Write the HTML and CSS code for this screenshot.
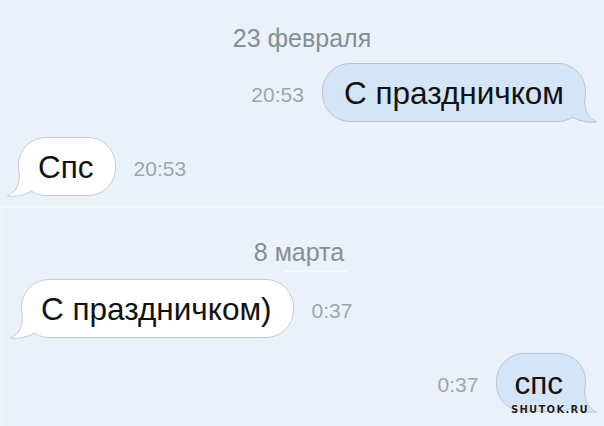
FILE: index.html
```html
<!DOCTYPE html>
<html>
<head>
    <title>Диалог</title>
    <link rel="stylesheet" href="styles.css">
</head>
<body>
    <div class="chat">
        <div class="day first">
            <div class="date">23 февраля</div>

            <div class="row out">
                <span class="time">20:53</span>
                <div class="bubble out">
                    С праздничком
                    <svg class="tail" width="26" height="22" viewBox="0 0 26 22">
                        <path class="tail-fill" d="M12 0 C12.5 11 16 17 24.5 21 C16 21.8 8 20.5 0 15.5 L0 0 Z"/>
                        <path class="tail-line" d="M12.6 0 C13 11 16 17 24.5 21 C16 21.8 8 20.5 0 15.8"/>
                    </svg>
                </div>
            </div>

            <div class="row in">
                <div class="bubble in">
                    Спс
                    <svg class="tail" width="26" height="22" viewBox="0 0 26 22">
                        <path class="tail-fill" d="M12 0 C12.5 11 16 17 24.5 21 C16 21.8 8 20.5 0 15.5 L0 0 Z"/>
                        <path class="tail-line" d="M12.6 0 C13 11 16 17 24.5 21 C16 21.8 8 20.5 0 15.8"/>
                    </svg>
                </div>
                <span class="time">20:53</span>
            </div>
        </div>

        <div class="day second">
            <div class="date">8 марта</div>
            <div class="mark"></div>

            <div class="row in">
                <div class="bubble in">
                    С праздничком)
                    <svg class="tail" width="26" height="22" viewBox="0 0 26 22">
                        <path class="tail-fill" d="M12 0 C12.5 11 16 17 24.5 21 C16 21.8 8 20.5 0 15.5 L0 0 Z"/>
                        <path class="tail-line" d="M12.6 0 C13 11 16 17 24.5 21 C16 21.8 8 20.5 0 15.8"/>
                    </svg>
                </div>
                <span class="time">0:37</span>
            </div>

            <div class="row out last">
                <span class="time">0:37</span>
                <div class="bubble out small">
                    спс
                    <svg class="tail" width="26" height="22" viewBox="0 0 26 22">
                        <path class="tail-fill" d="M12 0 C12.5 11 16 17 24.5 21 C16 21.8 8 20.5 0 15.5 L0 0 Z"/>
                        <path class="tail-line" d="M12.6 0 C13 11 16 17 24.5 21 C16 21.8 8 20.5 0 15.8"/>
                    </svg>
                    <span class="watermark">SHUTOK.RU</span>
                </div>
            </div>
        </div>
    </div>
</body>
</html>
```

FILE: styles.css
```css
body {
    margin: 0;
    background-color: #ebf1f9;
    font-family: "Liberation Sans", Arial, sans-serif;
}
.chat {
    display: flex;
    flex-direction: column;
    width: 604px;
    height: 426px;
    overflow: hidden;
}
.day {
    display: flex;
    flex-direction: column;
}
.day.first {
    padding: 26px 0 10px;
}
.day.second {
    flex: 1;
    margin-left: 1px;
    border-top: 2px solid #f4f8fc;
    border-left: 2px solid #f1f5fb;
    padding-top: 32px;
}
.date {
    text-align: center;
    font-size: 25px;
    line-height: 24px;
    color: #878d95;
    margin-bottom: 13px;
}
.second .date {
    margin-bottom: 6px;
    padding-right: 9px;
}
.mark {
    width: 64px;
    height: 2px;
    margin: 0 0 7px 280px;
    background-color: #f7fafd;
}
.row {
    display: flex;
    align-items: center;
    gap: 18px;
    padding: 0 18px;
}
.row.out {
    justify-content: flex-end;
    margin-bottom: 15px;
}
.row.last {
    margin-top: 15px;
    margin-bottom: 0;
}
.time {
    font-size: 21px;
    color: #a0a5ac;
    padding-top: 5px;
}
.bubble {
    position: relative;
    padding: 11px 21px 10px;
    font-size: 31.5px;
    line-height: 36px;
    color: #111;
    border-radius: 28px;
    border: 1px solid #c6ccd4;
    background-color: #fff;
}
.bubble.in {
    padding-left: 19px;
}
.bubble.out {
    background-color: #d5e5f8;
    border-color: #b4c4d8;
}
.bubble.small {
    padding-left: 17px;
    padding-right: 22px;
}
.tail {
    position: absolute;
    right: -13px;
    bottom: -2px;
}
.bubble.in .tail {
    right: auto;
    left: -13px;
    transform: scaleX(-1);
}
.tail-fill {
    fill: #fff;
}
.tail-line {
    fill: none;
    stroke: #c6ccd4;
    stroke-width: 1;
}
.bubble.out .tail-fill {
    fill: #d5e5f8;
}
.bubble.out .tail-line {
    stroke: #b4c4d8;
}
.watermark {
    position: absolute;
    right: -4px;
    bottom: -4px;
    font-family: "DejaVu Sans", sans-serif;
    font-weight: bold;
    font-size: 10px;
    line-height: 10px;
    letter-spacing: 1.3px;
    color: #1c1c1c;
    text-shadow: 0 0 2px #fff, 0 0 1px #fff;
}
```
